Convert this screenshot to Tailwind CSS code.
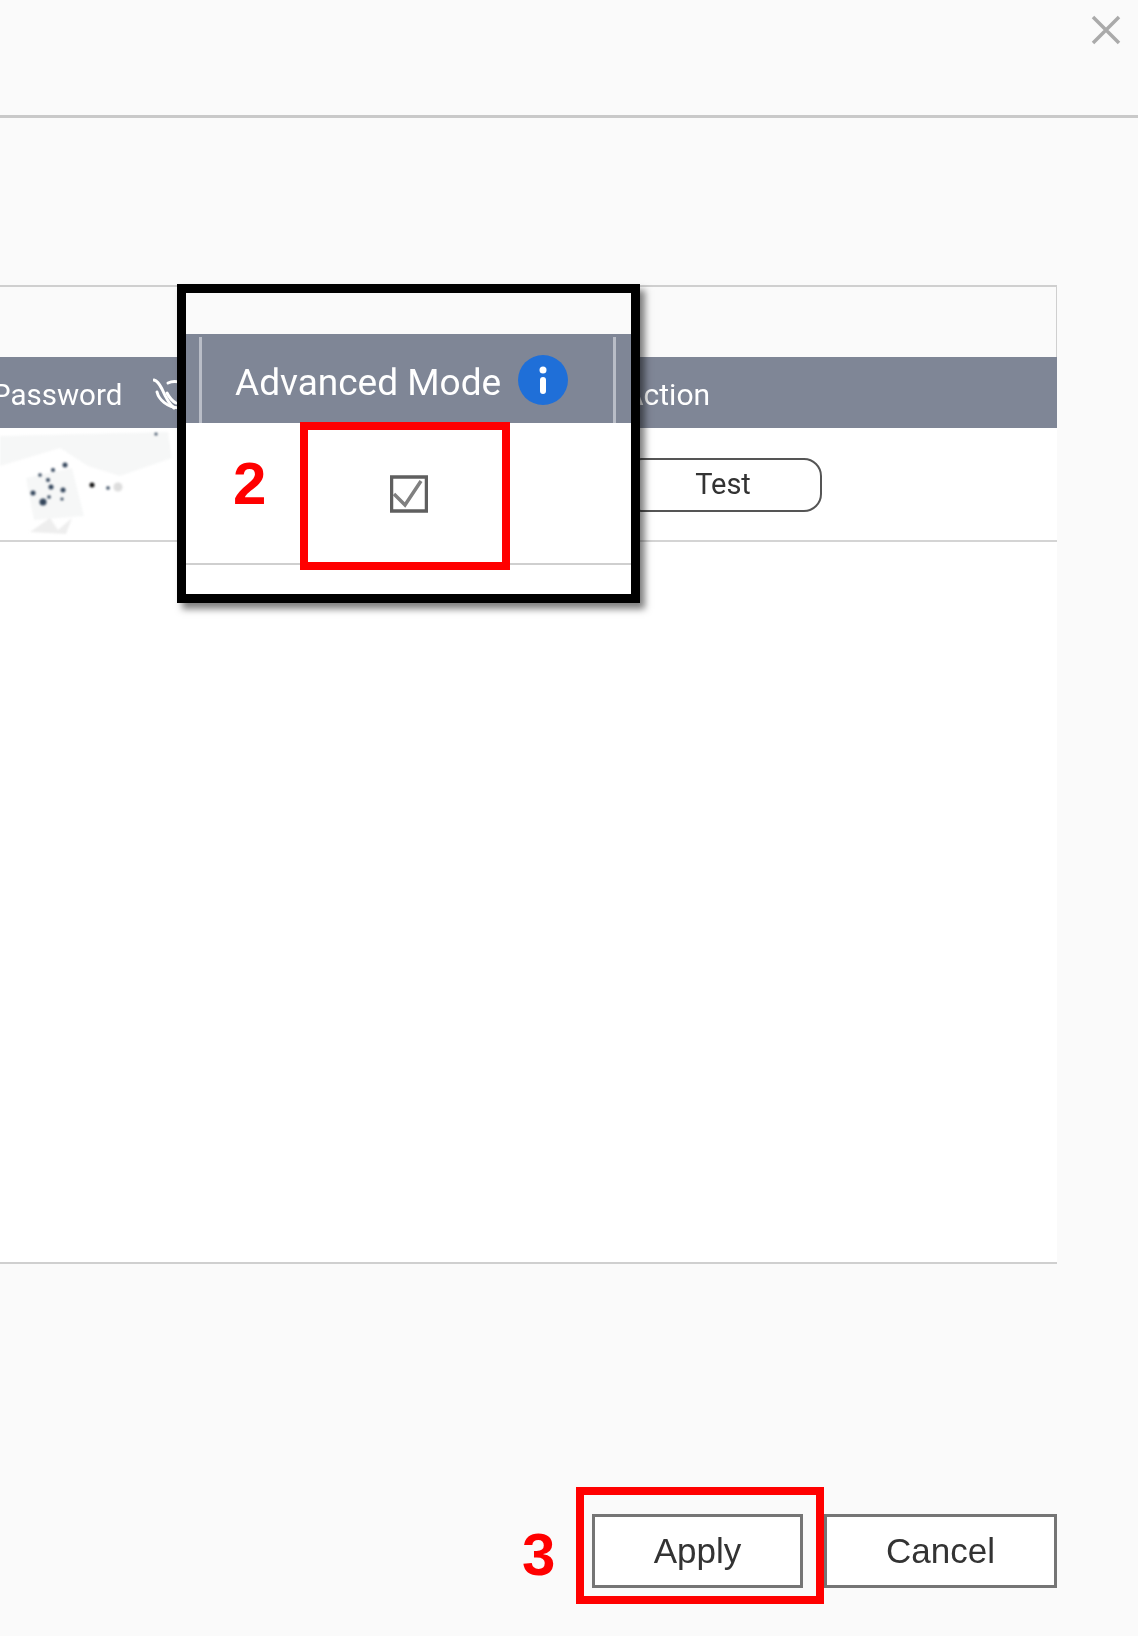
<!DOCTYPE html>
<html lang="en">
<head>
    <meta charset="UTF-8">
    <title>Advanced Mode</title>
    <script src="https://cdn.jsdelivr.net/npm/@tailwindcss/browser@4"></script>
</head>
<body class="bg-[#fafafa]">
    <div class="relative w-[1138px] h-[1636px] overflow-hidden bg-[#fafafa] font-['Roboto',sans-serif] text-[#333] blur-[0.5px]">
        <!-- Dialog header -->
        <div class="flex justify-end h-[118px] border-b-[3px] border-[#c9c9c9] pt-[15px] pr-[17px]">
            <svg width="30" height="30" viewBox="0 0 30 30">
                <path d="M2 2 L28 28 M28 2 L2 28" stroke="#aaaaaa" stroke-width="3.5" fill="none"/>
            </svg>
        </div>

        <!-- Table -->
        <div class="mt-[167px] mr-[81px] border-t-2 border-b-2 border-[#cfcfcf] h-[979px] flex flex-col bg-white">
            <div class="h-[70px] bg-[#fafafa] border-r border-[#cfcfcf]"></div>
            <div class="flex items-center h-[71px] bg-[#7f8696] text-white text-[29.5px]">
                <span class="ml-[-8px] w-[161px] pt-[6px]">Password</span>
                <svg width="34" height="34" viewBox="0 0 34 34" fill="none" stroke="#ffffff" stroke-width="3" stroke-linecap="round" class="mt-[5px]">
                    <path d="M1 2 C5 3 7 7 9 11 C12 18 15 25 21 30"/>
                    <path d="M4 14 C6 22 14 29 26 30"/>
                    <path d="M15 5 C19 3 24 3 30 5"/>
                    <path d="M14 15 C16 19 19 23 23 25"/>
                </svg>
                <span class="ml-[437px] pt-[4px] text-[30px]">Action</span>
            </div>
            <div class="flex items-center h-[114px] border-b-2 border-[#d4d4d4]">
                <svg width="176" height="112" viewBox="0 0 176 112" class="blur-[1px]">
                    <path d="M0 8 L168 4 L172 30 L120 48 L88 38 L60 20 L0 38 Z" fill="#f6f7f7"/>
                    <path d="M26 50 L72 40 L84 88 L34 92 Z" fill="#f6f7f7"/>
                    <path d="M30 104 L50 90 L58 102 L72 90 L66 106 Z" fill="#eeeeee"/>
                    <g fill="#34465c">
                        <circle cx="65" cy="37" r="2.5"/><circle cx="53" cy="42" r="2"/><circle cx="40" cy="47" r="1.8"/>
                        <circle cx="48" cy="52" r="2"/><circle cx="51" cy="59" r="2.5"/><circle cx="63" cy="62" r="2.5"/>
                        <circle cx="33" cy="65" r="2.5"/><circle cx="43" cy="74" r="3.5"/><circle cx="49" cy="69" r="1.8"/>
                        <circle cx="62" cy="71" r="1.6"/><circle cx="108" cy="60" r="1.8"/><circle cx="156" cy="6" r="1.5"/>
                    </g>
                    <circle cx="92" cy="57" r="2.5" fill="#111111"/>
                    <circle cx="118" cy="59" r="4.5" fill="#dddddd"/>
                </svg>
                <button class="ml-[448px] w-[198px] h-[54px] mb-[-2px] border-2 border-[#555] rounded-[18px] bg-white text-[29px] text-[#333] flex items-center justify-center">Test</button>
            </div>
        </div>

        <!-- Footer buttons -->
        <div class="flex justify-end mt-[250px] mr-[81px] font-['Liberation_Sans',sans-serif] text-[35px] text-[#333]">
            <button class="w-[211px] h-[74px] mr-[21px] border-[3px] border-[#757575] bg-white">Apply</button>
            <button class="w-[233px] h-[74px] border-[3px] border-[#757575] bg-white">Cancel</button>
        </div>

        <!-- Callout over the table -->
        <div class="absolute left-[177px] top-[284px] w-[463px] h-[319px] border-[9px] border-black bg-white shadow-[5px_6px_7px_rgba(0,0,0,0.5)] flex flex-col">
            <div class="h-[41px] bg-[#fafafa]"></div>
            <div class="relative flex items-center h-[89px] bg-[#7f8696] text-white text-[37px] pl-[49px]">
                <span class="absolute left-[13px] top-[3px] bottom-0 w-[3px] bg-[#b9bdc7]"></span>
                <span class="pt-[9px]">Advanced Mode</span>
                <span class="ml-[17px] mt-[2px] flex items-center justify-center w-[50px] h-[50px] rounded-full bg-[#1f6fd8]">
                    <svg width="10" height="28" viewBox="0 0 10 28" fill="#ffffff">
                        <circle cx="5" cy="4" r="3.5"/>
                        <rect x="2" y="11" width="6" height="17" rx="3"/>
                    </svg>
                </span>
                <span class="absolute left-[427px] top-[3px] bottom-0 w-[3px] bg-[#b9bdc7]"></span>
            </div>
            <div class="h-[142px] border-b-2 border-[#cfcfcf]"></div>
        </div>

        <!-- Red annotations -->
        <div class="absolute left-[300px] top-[422px] w-[210px] h-[148px] border-[8px] border-[#ff0000] flex items-center justify-center">
            <svg width="38" height="38" viewBox="0 0 38 38" fill="none" class="ml-[8px] mt-[-4px]">
                <rect x="1.5" y="2" width="35" height="34" stroke="#5f5f5f" stroke-width="3.5"/>
                <path d="M4 19 L15 30 L31 6" stroke="#808080" stroke-width="3.5"/>
            </svg>
        </div>
        <span class="absolute left-[233px] top-[450px] font-['Liberation_Sans',sans-serif] font-bold text-[60px] leading-[68px] text-[#ff0000]">2</span>

        <div class="absolute left-[576px] top-[1487px] w-[248px] h-[117px] border-[8px] border-[#ff0000]"></div>
        <span class="absolute left-[522px] top-[1521px] font-['Liberation_Sans',sans-serif] font-bold text-[60px] leading-[68px] text-[#ff0000]">3</span>
    </div>
</body>
</html>
